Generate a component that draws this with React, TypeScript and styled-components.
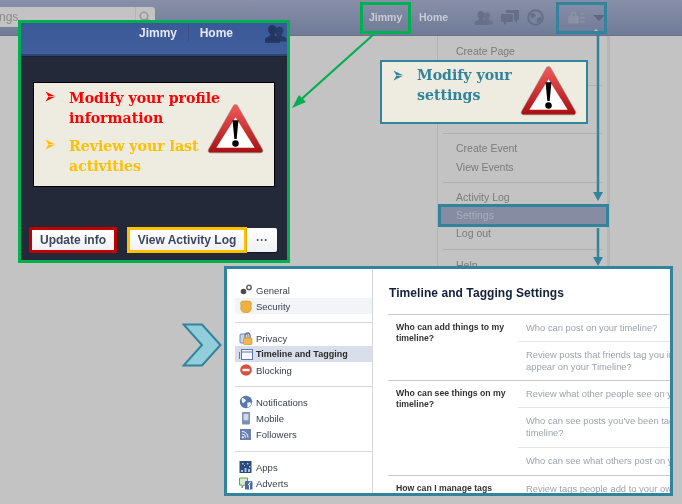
import React from 'react';
import styled, { createGlobalStyle } from 'styled-components';

const GlobalStyle = createGlobalStyle`
  html, body {
    margin: 0;
    padding: 0;
    background: #c3c3c3;
  }
  * {
    box-sizing: border-box;
  }
`;

const TEAL = '#31849b';
const GREEN = '#00b050';

const Canvas = styled.div`
  position: relative;
  width: 682px;
  height: 504px;
  overflow: hidden;
  background: #c3c3c3;
  font-family: 'Liberation Sans', Arial, sans-serif;
  filter: blur(0.35px);
`;

/* dimmed facebook page behind the annotations */
const TopBar = styled.header`
  height: 36px;
  display: flex;
  align-items: center;
  background: linear-gradient(#888fa8, #6f7b97);
  border-bottom: 1px solid #6a7285;
`;

const SearchBox = styled.div`
  width: 155px;
  height: 20px;
  margin-top: -1px;
  display: flex;
  align-items: center;
  justify-content: flex-end;
  background: #c3c3c3;
  border-radius: 0 3px 3px 0;
  overflow: hidden;
`;

const SearchText = styled.span`
  flex: 1;
  font-size: 12px;
  color: #8c8c8c;
  margin-left: -1px;
`;

const SearchButton = styled.span`
  width: 20px;
  height: 20px;
  padding-right: 2px;
  display: flex;
  align-items: center;
  justify-content: center;
  border-left: 1px solid #b4b4b4;
`;

const NavLinks = styled.nav`
  margin-left: 214px;
  margin-top: -2px;
  display: flex;
  align-items: center;
  font-size: 10.5px;
  font-weight: 700;
  color: #c9ccd6;
`;

const NavLink = styled.span<{ $w: number }>`
  width: ${(p) => p.$w}px;
`;

const NavIcons = styled.div`
  margin-left: 26px;
  display: flex;
  align-items: center;
  gap: 8px;
  color: #666e88;
`;

const AccountIcons = styled.div`
  margin-left: 24px;
  display: flex;
  align-items: center;
  gap: 8px;
  color: #8b92a7;
`;

const Caret = styled.span`
  width: 0;
  height: 0;
  border-left: 6px solid transparent;
  border-right: 6px solid transparent;
  border-top: 6px solid #5f6780;
`;

const MenuNub = styled.span`
  position: absolute;
  left: 591px;
  top: 29px;
  width: 0;
  height: 0;
  border-left: 5px solid transparent;
  border-right: 5px solid transparent;
  border-bottom: 5px solid #c3c3c3;
`;

const Menu = styled.div`
  position: absolute;
  left: 437px;
  top: 36px;
  width: 173px;
  height: 240px;
  padding-top: 6px;
  background: #c3c3c3;
  border-left: 1px solid #b2b2b2;
  border-right: 3px solid #b6b6b6;
  font-size: 10.5px;
  color: #7b7b7b;
`;

const MenuItem = styled.div<{ $mt?: number }>`
  position: relative;
  height: 19px;
  margin-top: ${(p) => p.$mt ?? 0}px;
  padding-left: 18px;
  line-height: 18px;
`;

const MenuGap = styled.div<{ $h: number }>`
  height: ${(p) => p.$h}px;
`;

const MenuLine = styled.div<{ $my: number }>`
  height: 1px;
  margin: ${(p) => p.$my}px 5px;
  background: #b0b0b0;
`;

const SettingsItem = styled.div`
  height: 23px;
  margin: -3px -2px 0 0;
  padding-left: 15px;
  line-height: 17px;
  background: #868da3;
  border: 3px solid ${TEAL};
  color: #a9aebc;
`;

/* annotations */
const JimmyMark = styled.div`
  position: absolute;
  left: 360px;
  top: 2px;
  width: 51px;
  height: 32px;
  border: 3px solid ${GREEN};
`;

const AccountMark = styled.div`
  position: absolute;
  left: 556px;
  top: 2px;
  width: 51px;
  height: 32px;
  border: 3px solid ${TEAL};
`;

const Overlay = styled.svg`
  position: absolute;
  left: 0;
  top: 0;
  pointer-events: none;
`;

const ProfilePanel = styled.section`
  position: absolute;
  left: 18px;
  top: 20px;
  width: 272px;
  height: 243px;
  display: flex;
  flex-direction: column;
  border: 3px solid ${GREEN};
  background: #232938;
`;

const PanelHeader = styled.div`
  height: 33px;
  display: flex;
  align-items: center;
  overflow: hidden;
  padding: 0 0 12px 118px;
  background: linear-gradient(#3b5998, #415e9b);
  border-bottom: 2px solid #2d4476;
  font-size: 12px;
  font-weight: 700;
  color: #e4e8f2;
  box-shadow: 0 1px 0 #1b2130;
`;

const PanelLink = styled.span`
  margin-right: 22px;
`;

const PanelSeparator = styled.span`
  width: 1px;
  height: 18px;
  margin-right: 11px;
  margin-left: -11px;
  background: #3a5288;
`;

const PeopleIcon = styled.span`
  margin-left: 10px;
  margin-top: 2px;
  color: #22365f;
  display: flex;
`;

const NoteBox = styled.div`
  margin: 26px 12px 0 12px;
  height: 105px;
  position: relative;
  padding: 5px 10px 0 11px;
  background: #eeebe0;
  border: 1px solid #000;
`;

const Bullet = styled.li<{ $color: string; $gap?: number }>`
  list-style: none;
  display: grid;
  grid-template-columns: 24px 1fr;
  margin-bottom: ${(p) => p.$gap ?? 0}px;
  font-family: 'DejaVu Serif Condensed', 'DejaVu Serif', serif;
  font-stretch: condensed;
  font-size: 15.7px;
  font-weight: 700;
  line-height: 19.5px;
  color: ${(p) => p.$color};
`;

const BulletList = styled.ul`
  margin: 0;
  padding: 0;
`;

const BulletMark = styled.svg<{ $top: number }>`
  margin-top: ${(p) => p.$top}px;
`;

const WarningSpot = styled.span<{ $right: number; $top: number }>`
  position: absolute;
  right: ${(p) => p.$right}px;
  top: ${(p) => p.$top}px;
  display: flex;
`;

const ButtonRow = styled.div`
  margin: 40px 0 0 8px;
  display: flex;
  align-items: center;
`;

const ProfileButton = styled.div<{ $border: string; $w: number; $ml?: number }>`
  width: ${(p) => p.$w}px;
  height: 26px;
  margin-left: ${(p) => p.$ml ?? 0}px;
  display: flex;
  align-items: center;
  justify-content: center;
  background: linear-gradient(#fff, #f0f1f4);
  border: 3px solid ${(p) => p.$border};
  font-size: 12px;
  font-weight: 700;
  color: #3d4660;
`;

const MoreButton = styled.div`
  width: 30px;
  height: 24px;
  display: flex;
  align-items: center;
  justify-content: center;
  background: linear-gradient(#fff, #f0f1f4);
  border-radius: 0 2px 2px 0;
  box-shadow: 0 1px 1px #10141e;
  font-size: 12px;
  font-weight: 700;
  color: #4e5668;
`;

const SettingsNote = styled.div`
  position: absolute;
  left: 380px;
  top: 60px;
  width: 208px;
  height: 64px;
  padding: 3px 10px 0 11px;
  background: #eeebe0;
  border: 2px solid ${TEAL};
`;

const Chevron = styled.svg`
  position: absolute;
  left: 182px;
  top: 323px;
`;

/* settings screenshot */
const SettingsPanel = styled.section`
  position: absolute;
  left: 224px;
  top: 266px;
  width: 449px;
  height: 230px;
  display: flex;
  overflow: hidden;
  background: #fff;
  border: 3px solid ${TEAL};
`;

const Sidebar = styled.aside`
  width: 146px;
  flex: none;
  padding: 13px 0 0 8px;
  border-right: 1px solid #d3d6db;
`;

const NavRow = styled.div<{ $state?: 'hover' | 'active' }>`
  height: 16px;
  display: flex;
  align-items: center;
  gap: 3px;
  padding-left: 4px;
  font-size: ${(p) => (p.$state === 'active' ? 9 : 9.5)}px;
  font-weight: ${(p) => (p.$state === 'active' ? 700 : 400)};
  color: ${(p) => (p.$state === 'active' ? '#2b2b2b' : '#3c414e')};
  background: ${(p) =>
    p.$state === 'active' ? '#d8dfea' : p.$state === 'hover' ? '#f2f4f8' : 'transparent'};
`;

const NavIconBox = styled.svg`
  flex: none;
`;

const NavLine = styled.div<{ $mt?: number }>`
  height: 1px;
  margin: ${(p) => p.$mt ?? 8}px 0 7px;
  background: #d8d8d8;
`;

const Main = styled.main`
  flex: 1;
  min-width: 0;
  padding: 16px 0 0 15px;
`;

const MainTitle = styled.h1`
  margin: 0 0 13px 1px;
  height: 16px;
  font-size: 12px;
  line-height: 16px;
  letter-spacing: 0.07px;
  font-weight: 700;
  color: #141f3a;
  white-space: nowrap;
`;

const Section = styled.div`
  width: 420px;
  display: grid;
  grid-template-columns: 130px 290px;
  border-top: 1px solid #c9c9c9;
`;

const SectionLabel = styled.div`
  padding: 7px 0 0 8px;
  font-size: 8.7px;
  font-weight: 700;
  line-height: 11px;
  color: #333;
`;

const SectionRows = styled.div``;

const SectionRow = styled.div<{ $h: number; $first?: boolean }>`
  height: ${(p) => p.$h}px;
  padding: 7px 0 0 8px;
  border-top: ${(p) => (p.$first ? 'none' : '1px solid #e4e4e4')};
  font-size: 9.4px;
  line-height: 12px;
  color: #9ea2ab;
  white-space: nowrap;
`;

const WarningIcon: React.FC<{ id: string; size: number }> = ({ id, size }) => (
  <svg width={size} height={size * 0.9} viewBox="0 0 58 52">
    <defs>
      <linearGradient id={id} x1="0" y1="0" x2="0" y2="1">
        <stop offset="0" stopColor="#f25a5c" />
        <stop offset="1" stopColor="#a80f12" />
      </linearGradient>
    </defs>
    <path d="M29 1.5c1.3 0 2 .8 2.6 1.9L56.4 47c.8 1.6.2 3.6-2 3.6H3.6c-2.2 0-2.8-2-2-3.6L26.4 3.4C27 2.3 27.7 1.5 29 1.5z" fill={`url(#${id})`} stroke="#8d8d80" strokeWidth="0.6" />
    <path d="M29 14.5 L48.5 45.5 H9.5 Z" fill="#fff" />
    <path d="M26 17.5h6l-1.800 19h-2.400z" fill="#000" />
    <circle cx="29" cy="41" r="3.3" fill="#000" />
  </svg>
);

const ArrowBullet: React.FC<{ color: string; top?: number }> = ({ color, top = 3 }) => (
  <BulletMark $top={top} width="11" height="11" viewBox="0 0 11 11">
    <path d="M0.5 0.5 L10.5 5.5 L0.5 10.5 L3.5 5.5 Z" fill={color} />
    <path d="M3.5 5.5 L10.5 5.5" stroke="#eeebe0" strokeWidth="0.7" />
  </BulletMark>
);

const People: React.FC<{ w: number }> = ({ w }) => (
  <svg width={w} height={w * 0.85} viewBox="0 0 20 17" fill="currentColor">
    <path d="M13.5 2.5c2 0 3.2 1.6 3.2 3.6 0 1.5-.7 2.8-1.7 3.4v1l3.2 1.500c1 .5 1.400 1.200 1.400 2.200V16H13l-.3-3-2.200-1.500V9.500c-.8-.8-1.200-2-1.200-3.400 0-2 1.900-3.600 4.200-3.600z" opacity=".85" />
    <path d="M6.500 1C9 1 10.500 3 10.500 5.300c0 1.700-.7 3.100-1.800 3.900v1.300l3.400 1.700c1 .5 1.400 1.200 1.400 2.200V17H0v-2.600c0-1 .4-1.700 1.400-2.200l3.400-1.700V9.200C3.700 8.400 2.800 7 2.800 5.300 2.800 3 4 1 6.500 1z" />
  </svg>
);

const Chat = () => (
  <svg width="18" height="17" viewBox="0 0 18 17" fill="currentColor">
    <path d="M5 1h12a1 1 0 0 1 1 1v8a1 1 0 0 1-1 1h-1v3l-3-3H13V5a1 1 0 0 0-1-1H5z" />
    <path d="M1 5h10a1 1 0 0 1 1 1v6a1 1 0 0 1-1 1H6l-3 3v-3H1a1 1 0 0 1-1-1V6a1 1 0 0 1 1-1z" />
  </svg>
);

const Globe = () => (
  <svg width="17" height="17" viewBox="0 0 17 17">
    <circle cx="8.500" cy="8.500" r="7.300" fill="none" stroke="currentColor" strokeWidth="2" />
    <path d="M4 3.500c2 .5 4 1 5 3-1 2-3 1.500-4 3-1-1-2-3-1-6zM10 9c2-1 4-1 5 0-1 3-3 5-5 5-.5-2 .5-3 0-5z" fill="currentColor" />
  </svg>
);

const LockLines = () => (
  <svg width="17" height="13" viewBox="0 0 17 13" fill="currentColor">
    <path d="M2.500 5V3.500a3 3 0 0 1 6 0V5h1.500a.8.8 0 0 1 .8.800V12.500H.2V5.800A.8.8 0 0 1 1 5zM4.200 5h2.600V3.500a1.300 1.300 0 0 0-2.600 0z" />
    <rect x="12.500" y="2" width="4" height="1.500" />
    <rect x="12.500" y="6" width="4" height="1.500" />
    <rect x="12.500" y="10" width="4" height="1.500" />
  </svg>
);

const SearchGlass = () => (
  <svg width="12" height="12" viewBox="0 0 12 12" fill="none" stroke="#999" strokeWidth="1.600">
    <circle cx="5" cy="5" r="3.800" />
    <path d="M8 8l3 3" strokeWidth="2" />
  </svg>
);

const navIcons: Record<string, React.ReactNode> = {
  General: (
    <>
      <circle cx="4.500" cy="8.500" r="2.800" fill="#4a4a4a" />
      <circle cx="10" cy="4.500" r="2.200" fill="none" stroke="#666" strokeWidth="1.500" />
    </>
  ),
  Security: (
    <path d="M3 2h8l1.500 2-.5 3 .5 3-2 3-3.500 1-3.500-1-2-3 .5-3-.5-3z" fill="#f0b040" stroke="#c98a20" strokeWidth=".5" />
  ),
  Privacy: (
    <>
      <rect x="1" y="3" width="8" height="9" rx="1" fill="#c9d4ea" stroke="#6a82b5" />
      <path d="M6 7V4.500a2.500 2.500 0 0 1 5 0V7" fill="none" stroke="#777" strokeWidth="1.300" />
      <rect x="4.500" y="7" width="8.500" height="6.500" rx="1" fill="#f2b84a" stroke="#c48a20" strokeWidth=".6" />
    </>
  ),
  'Timeline and Tagging': (
    <>
      <rect x="2.500" y="2.500" width="11" height="10" fill="#f6f8fc" stroke="#5d78ad" />
      <path d="M2.500 5h11M0.500 5v7" stroke="#5d78ad" fill="none" />
    </>
  ),
  Blocking: (
    <>
      <circle cx="7" cy="7" r="5.800" fill="#d9503c" />
      <rect x="3.500" y="5.800" width="7" height="2.400" fill="#fff" />
    </>
  ),
  Notifications: (
    <>
      <circle cx="7" cy="7" r="6.200" fill="#5a76b0" />
      <path d="M3 3c2 0 3 1 4 2.500-1 2-2.500 1.500-3 3C3 7.500 2 5 3 3zM8 8c2-1 3-.8 4.500 0-.5 2.500-2 4-4 4.500-.5-1.500.5-3 -.5-4.500z" fill="#eef1f8" />
    </>
  ),
  Mobile: (
    <>
      <rect x="3" y="1" width="8" height="12.500" rx="1" fill="#7e8fb5" />
      <rect x="4.500" y="2.800" width="5" height="6.500" fill="#cfd7e8" />
    </>
  ),
  Followers: (
    <>
      <rect x="1" y="2" width="11" height="11" fill="#6b80b0" />
      <circle cx="3.800" cy="10.200" r="1" fill="#fff" />
      <path d="M3 7a3.500 3.500 0 0 1 3.500 3.500M3 4.500a6 6 0 0 1 6 6" fill="none" stroke="#fff" />
    </>
  ),
  Apps: (
    <>
      <rect x="0.500" y="1" width="12" height="12" fill="#2e4a78" />
      <path d="M2 10h2v2H2zM5.500 8h2v4h-2zM9 9h2v3H9zM3 3h1.500v1.500H3zM8 3h1.500v1.500H8zM10 6h1.500v1.500H10zM5 5h1v1H5z" fill="#9cc4ea" />
    </>
  ),
  Adverts: (
    <>
      <path d="M0.500 2h8v7H4.500L3 12V9H0.500z" fill="#d9ecd0" stroke="#6a9e5a" />
      <rect x="6" y="5" width="7.500" height="8.500" rx="1" fill="#4a68a8" />
      <path d="M10.500 13.500V9h-1V8h1V7.200c0-1 .6-1.200 1.600-1.100" fill="none" stroke="#fff" />
    </>
  ),
};

const NavEntry: React.FC<{ label: string; state?: 'hover' | 'active' }> = ({ label, state }) => (
  <NavRow $state={state}>
    <NavIconBox width="14" height="14" viewBox="0 0 14 14">
      {navIcons[label]}
    </NavIconBox>
    {label}
  </NavRow>
);

const App: React.FC = () => (
  <Canvas>
    <GlobalStyle />
    <TopBar>
      <SearchBox>
        <SearchText>ngs</SearchText>
        <SearchButton>
          <SearchGlass />
        </SearchButton>
      </SearchBox>
      <NavLinks>
        <NavLink $w={50}>Jimmy</NavLink>
        <NavLink $w={30}>Home</NavLink>
      </NavLinks>
      <NavIcons>
        <People w={18} />
        <Chat />
        <Globe />
      </NavIcons>
      <AccountIcons>
        <LockLines />
        <Caret />
      </AccountIcons>
    </TopBar>

    <MenuNub />
    <Menu>
      <MenuItem>Create Page</MenuItem>
      <MenuGap $h={17} />
      <MenuLine $my={7} />
      <MenuGap $h={35} />
      <MenuLine $my={5} />
      <MenuItem>Create Event</MenuItem>
      <MenuItem>View Events</MenuItem>
      <MenuLine $my={5} />
      <MenuItem>Activity Log</MenuItem>
      <SettingsItem>Settings</SettingsItem>
      <MenuItem $mt={-3}>Log out</MenuItem>
      <MenuLine $my={6} />
      <MenuItem>Help</MenuItem>
    </Menu>

    <JimmyMark />
    <AccountMark />

    <Overlay width="682" height="504" viewBox="0 0 682 504">
      <path d="M374 34 L296 104" stroke={GREEN} strokeWidth="2.200" />
      <path d="M292 108 L306 102 L299 95 Z" fill={GREEN} />
      <path d="M598 34 V194 M598 228 V258" stroke={TEAL} strokeWidth="2.500" />
      <path d="M593 192 H603 L598 201 Z M593 257 H603 L598 266 Z" fill={TEAL} />
    </Overlay>

    <ProfilePanel>
      <PanelHeader>
        <PanelLink>Jimmy</PanelLink>
        <PanelSeparator />
        <PanelLink>Home</PanelLink>
        <PeopleIcon>
          <People w={22} />
        </PeopleIcon>
      </PanelHeader>
      <NoteBox>
        <BulletList>
          <Bullet $color="#ff0000" $gap={9}>
            <ArrowBullet color="#ff0000" />
            <span>
              Modify your profile
              <br />
              information
            </span>
          </Bullet>
          <Bullet $color="#ffc000">
            <ArrowBullet color="#ffc000" />
            <span>
              Review your last
              <br />
              activities
            </span>
          </Bullet>
        </BulletList>
        <WarningSpot $right={10} $top={20}>
          <WarningIcon id="warnA" size={57} />
        </WarningSpot>
      </NoteBox>
      <ButtonRow>
        <ProfileButton $border="#c00000" $w={88}>
          Update info
        </ProfileButton>
        <ProfileButton $border="#ffc000" $w={120} $ml={10}>
          View Activity Log
        </ProfileButton>
        <MoreButton>···</MoreButton>
      </ButtonRow>
    </ProfilePanel>

    <SettingsNote>
      <BulletList>
        <Bullet $color={TEAL}>
          <ArrowBullet color={TEAL} top={5} />
          <span>
            Modify your
            <br />
            settings
          </span>
        </Bullet>
      </BulletList>
      <WarningSpot $right={9} $top={3}>
        <WarningIcon id="warnB" size={57} />
      </WarningSpot>
    </SettingsNote>

    <Chevron width="40" height="44" viewBox="0 0 40 44">
      <path d="M1.500 1.500 H20 L38.500 22 L20 42.500 H1.500 L20 22 Z" fill="#92cddc" stroke={TEAL} strokeWidth="2" />
    </Chevron>

    <SettingsPanel>
      <Sidebar>
        <NavEntry label="General" />
        <NavEntry label="Security" state="hover" />
        <NavLine />
        <NavEntry label="Privacy" />
        <NavEntry label="Timeline and Tagging" state="active" />
        <NavEntry label="Blocking" />
        <NavLine />
        <NavEntry label="Notifications" />
        <NavEntry label="Mobile" />
        <NavEntry label="Followers" />
        <NavLine $mt={9} />
        <NavEntry label="Apps" />
        <NavEntry label="Adverts" />
      </Sidebar>
      <Main>
        <MainTitle>Timeline and Tagging Settings</MainTitle>
        <Section>
          <SectionLabel>
            Who can add things to my
            <br />
            timeline?
          </SectionLabel>
          <SectionRows>
            <SectionRow $h={26} $first>Who can post on your timeline?</SectionRow>
            <SectionRow $h={39}>
              Review posts that friends tag you in before they
              <br />
              appear on your Timeline?
            </SectionRow>
          </SectionRows>
        </Section>
        <Section>
          <SectionLabel>
            Who can see things on my
            <br />
            timeline?
          </SectionLabel>
          <SectionRows>
            <SectionRow $h={26} $first>Review what other people see on your timeline</SectionRow>
            <SectionRow $h={40}>
              Who can see posts you've been tagged in on your
              <br />
              timeline?
            </SectionRow>
            <SectionRow $h={28}>Who can see what others post on your timeline?</SectionRow>
          </SectionRows>
        </Section>
        <Section>
          <SectionLabel>How can I manage tags</SectionLabel>
          <SectionRows>
            <SectionRow $h={27} $first>Review tags people add to your own posts</SectionRow>
          </SectionRows>
        </Section>
      </Main>
    </SettingsPanel>
  </Canvas>
);

export default App;
